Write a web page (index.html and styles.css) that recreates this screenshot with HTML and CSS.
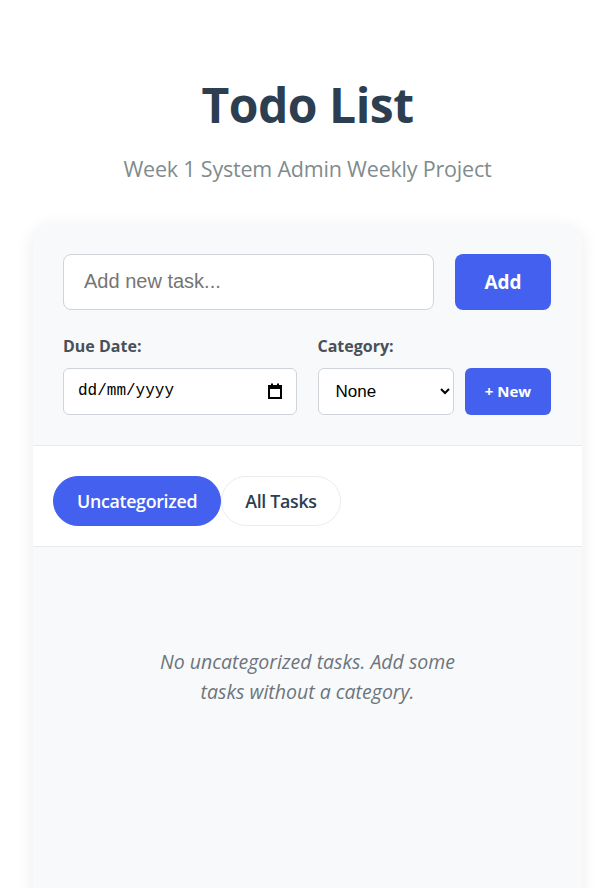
FILE: index.html
```html
<!DOCTYPE html>
<html lang="en">
<head>
<meta charset="utf-8">
<title>Todo List</title>
<link rel="stylesheet" href="styles.css">
</head>
<body>
<div class="container">
  <header class="header">
    <h1 class="title">Todo List</h1>
    <p class="subtitle">Week 1 System Admin Weekly Project</p>
  </header>
  <main class="card">
    <section class="input-section">
      <div class="task-row">
        <input class="task-input" type="text" placeholder="Add new task...">
        <button class="btn btn-add">Add</button>
      </div>
      <div class="options-row">
        <div class="field">
          <label class="field-label">Due Date:</label>
          <div class="date-field">
            <input class="date-input" type="text" placeholder="dd/mm/yyyy">
            <svg class="cal-icon" width="14" height="16" viewBox="0 0 14 16" aria-hidden="true">
              <rect x="1" y="3" width="12" height="12" fill="none" stroke="#000" stroke-width="2"/>
              <rect x="1" y="3" width="12" height="3" fill="#000"/>
              <rect x="3" y="0.5" width="2" height="3" fill="#000"/>
              <rect x="9" y="0.5" width="2" height="3" fill="#000"/>
            </svg>
          </div>
        </div>
        <div class="field">
          <label class="field-label">Category:</label>
          <div class="category-row">
            <select class="category-select">
              <option>None</option>
            </select>
            <button class="btn btn-new">+ New</button>
          </div>
        </div>
      </div>
    </section>
    <nav class="tabs">
      <button class="tab tab-active">Uncategorized</button>
      <button class="tab">All Tasks</button>
    </nav>
    <section class="list">
      <p class="empty">No uncategorized tasks. Add some tasks without a category.</p>
    </section>
  </main>
</div>
</body>
</html>
```
FILE: styles.css
```css
* { box-sizing: border-box; }

html, body {
  margin: 0;
  background: #ffffff;
}

body {
  padding: 0 25px 0 33px;
  font-family: "Open Sans", "Noto Sans", sans-serif;
  color: #2c3e50;
  overflow: hidden;
}

.container {
  width: 100%;
}

.header {
  text-align: center;
  padding-top: 76px;
  padding-bottom: 40px;
}

.title {
  margin: 0;
  font-size: 48px;
  font-weight: 700;
  line-height: 1.2;
  letter-spacing: -0.5px;
  color: #2c3e50;
}

.subtitle {
  margin: 20px 0 0;
  font-size: 21.5px;
  line-height: 1.4;
  color: #7f8c8d;
  letter-spacing: -0.2px;
}

.card {
  background: #f8f9fa;
  border-radius: 16px 16px 0 0;
  box-shadow: 0 4px 18px rgba(0, 0, 0, 0.08);
  overflow: hidden;
}

.input-section {
  padding: 30px 31px 30px 30px;
  border-bottom: 1px solid #e9ecef;
}

.task-row {
  display: flex;
  gap: 21px;
}

.task-input {
  flex: 1;
  min-width: 0;
  height: 56px;
  padding: 0 20px;
  border: 1px solid #ced4da;
  border-radius: 8px;
  background: #fff;
  font-family: "Liberation Sans", Arial, sans-serif;
  font-size: 20px;
  color: #333;
}

.task-input::placeholder { color: #757575; }

.btn {
  border: none;
  background: #4361ee;
  color: #fff;
  font-family: "Open Sans", "Noto Sans", sans-serif;
  font-weight: 700;
  border-radius: 8px;
  cursor: pointer;
}

.btn-add {
  width: 96px;
  height: 56px;
  font-size: 19px;
}

.options-row {
  display: grid;
  grid-template-columns: minmax(0, 1fr) minmax(0, 1fr);
  gap: 21px;
  margin-top: 25px;
}

.field {
  display: flex;
  flex-direction: column;
  min-width: 0;
}

.field-label {
  font-size: 16px;
  font-weight: 700;
  line-height: 22px;
  color: #495057;
  margin-bottom: 11px;
}

.date-field {
  display: flex;
  align-items: center;
  height: 47px;
  padding: 0 14px 0 14px;
  border: 1px solid #ced4da;
  border-radius: 6px;
  background: #fff;
}

.date-input {
  flex: 1;
  min-width: 0;
  width: 0;
  border: none;
  outline: none;
  padding: 0;
  background: transparent;
  font-family: "Liberation Mono", "DejaVu Sans Mono", monospace;
  font-size: 16px;
  color: #000;
}

.date-input::placeholder { color: #000; }

.cal-icon { flex: none; }

.category-row {
  display: flex;
  gap: 11px;
}

.category-select {
  flex: 1;
  min-width: 0;
  height: 47px;
  padding: 0 10px 0 13px;
  border: 1px solid #ced4da;
  border-radius: 6px;
  background: #fff;
  font-family: "Liberation Sans", Arial, sans-serif;
  font-size: 17px;
  color: #000;
}

.btn-new {
  flex: none;
  width: 86px;
  height: 47px;
  font-size: 15px;
  border-radius: 6px;
}

.tabs {
  display: flex;
  background: #fff;
  padding: 30px 20px 20px;
  border-bottom: 1px solid #e9ecef;
}

.tab {
  height: 50px;
  padding: 0 23px;
  border: 1px solid #e9ecef;
  border-radius: 25px;
  background: #fff;
  color: #2c3e50;
  font-family: "Open Sans", "Noto Sans", sans-serif;
  font-size: 17.8px;
  font-weight: 600;
  letter-spacing: -0.3px;
  cursor: pointer;
}

.tab-active {
  background: #4361ee;
  border-color: #4361ee;
  color: #fff;
}

.list {
  min-height: 420px;
  padding: 100px 20px 0;
}

.empty {
  max-width: 330px;
  margin: 0 auto;
  text-align: center;
  font-style: italic;
  font-size: 19.5px;
  line-height: 30px;
  color: #6c757d;
}
```
